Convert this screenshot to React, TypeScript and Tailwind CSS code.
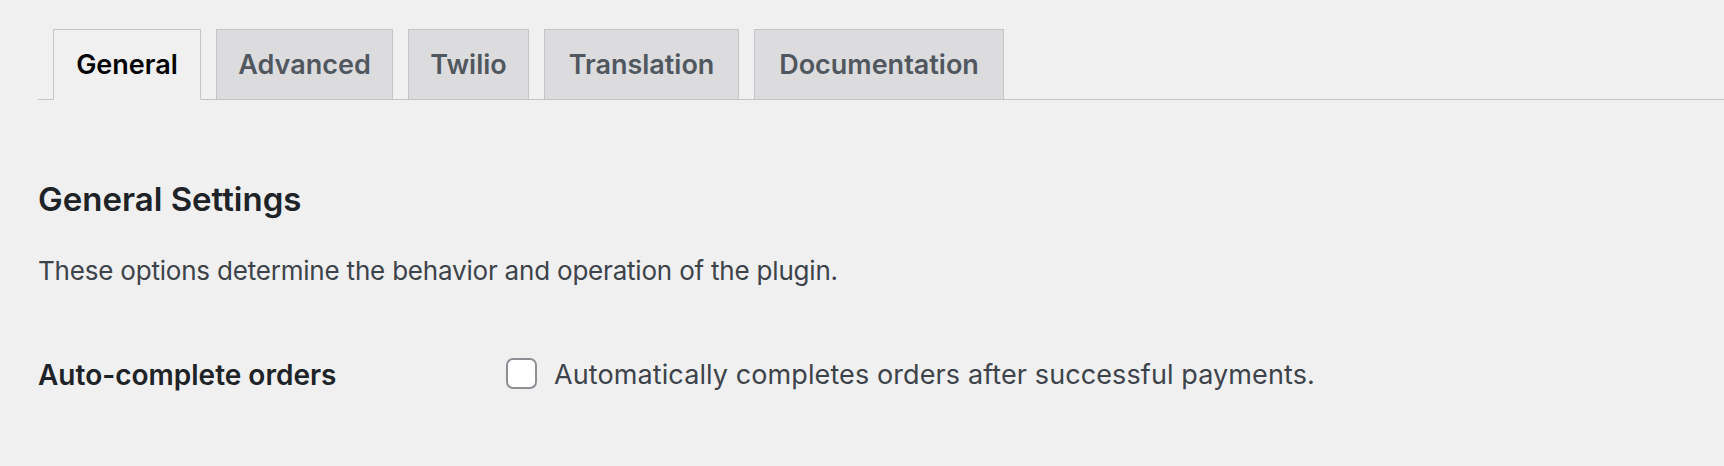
const tabs = [
  { label: "General", width: "w-[148px]", active: true },
  { label: "Advanced", width: "w-[177px]", active: false },
  { label: "Twilio", width: "w-[121px]", active: false },
  { label: "Translation", width: "w-[195px]", active: false },
  { label: "Documentation", width: "w-[250px]", active: false },
];

export default function App() {
  return (
    <div className="min-h-[466px] w-full bg-[#f0f0f1] pl-[38px] font-['Inter','Noto_Sans',sans-serif] antialiased">
      {/* Tabs */}
      <nav className="flex items-end border-b border-[#c3c4c7] pt-[29px]">
        {tabs.map((t) => (
          <a
            key={t.label}
            className={
              t.active
                ? `${t.width} ml-[15px] -mb-px flex h-[71px] items-center justify-center border border-[#c3c4c7] border-b-[#f0f0f1] bg-[#f0f0f1] pt-[2px] text-[27px] font-semibold text-black`
                : `${t.width} ml-[15px] -mb-px flex h-[71px] items-center justify-center border border-[#c3c4c7] bg-[#dcdcde] pt-[2px] text-[27px] font-semibold text-[#50575e]`
            }
          >
            {t.label}
          </a>
        ))}
      </nav>

      {/* Section */}
      <h2 className="mt-[79px] text-[33px] font-semibold leading-[40px] text-[#1d2327]">
        General Settings
      </h2>
      <p className="mt-[34px] text-[26px] leading-[36px] tracking-[-0.2px] text-[#3c434a]">
        These options determine the behavior and operation of the plugin.
      </p>

      {/* Option row */}
      <div className="mt-[68px] flex items-start">
        <div className="w-[468px] text-[28px] font-semibold leading-[36px] text-[#1d2327]">
          Auto-complete orders
        </div>
        <label className="flex items-start gap-[17px]">
          <span className="mt-[1px] h-[31px] w-[31px] rounded-[7px] border-2 border-[#8c8f94] bg-white" />
          <span className="text-[27px] leading-[36px] tracking-[0.1px] text-[#3c434a]">
            Automatically completes orders after successful payments.
          </span>
        </label>
      </div>
    </div>
  );
}
